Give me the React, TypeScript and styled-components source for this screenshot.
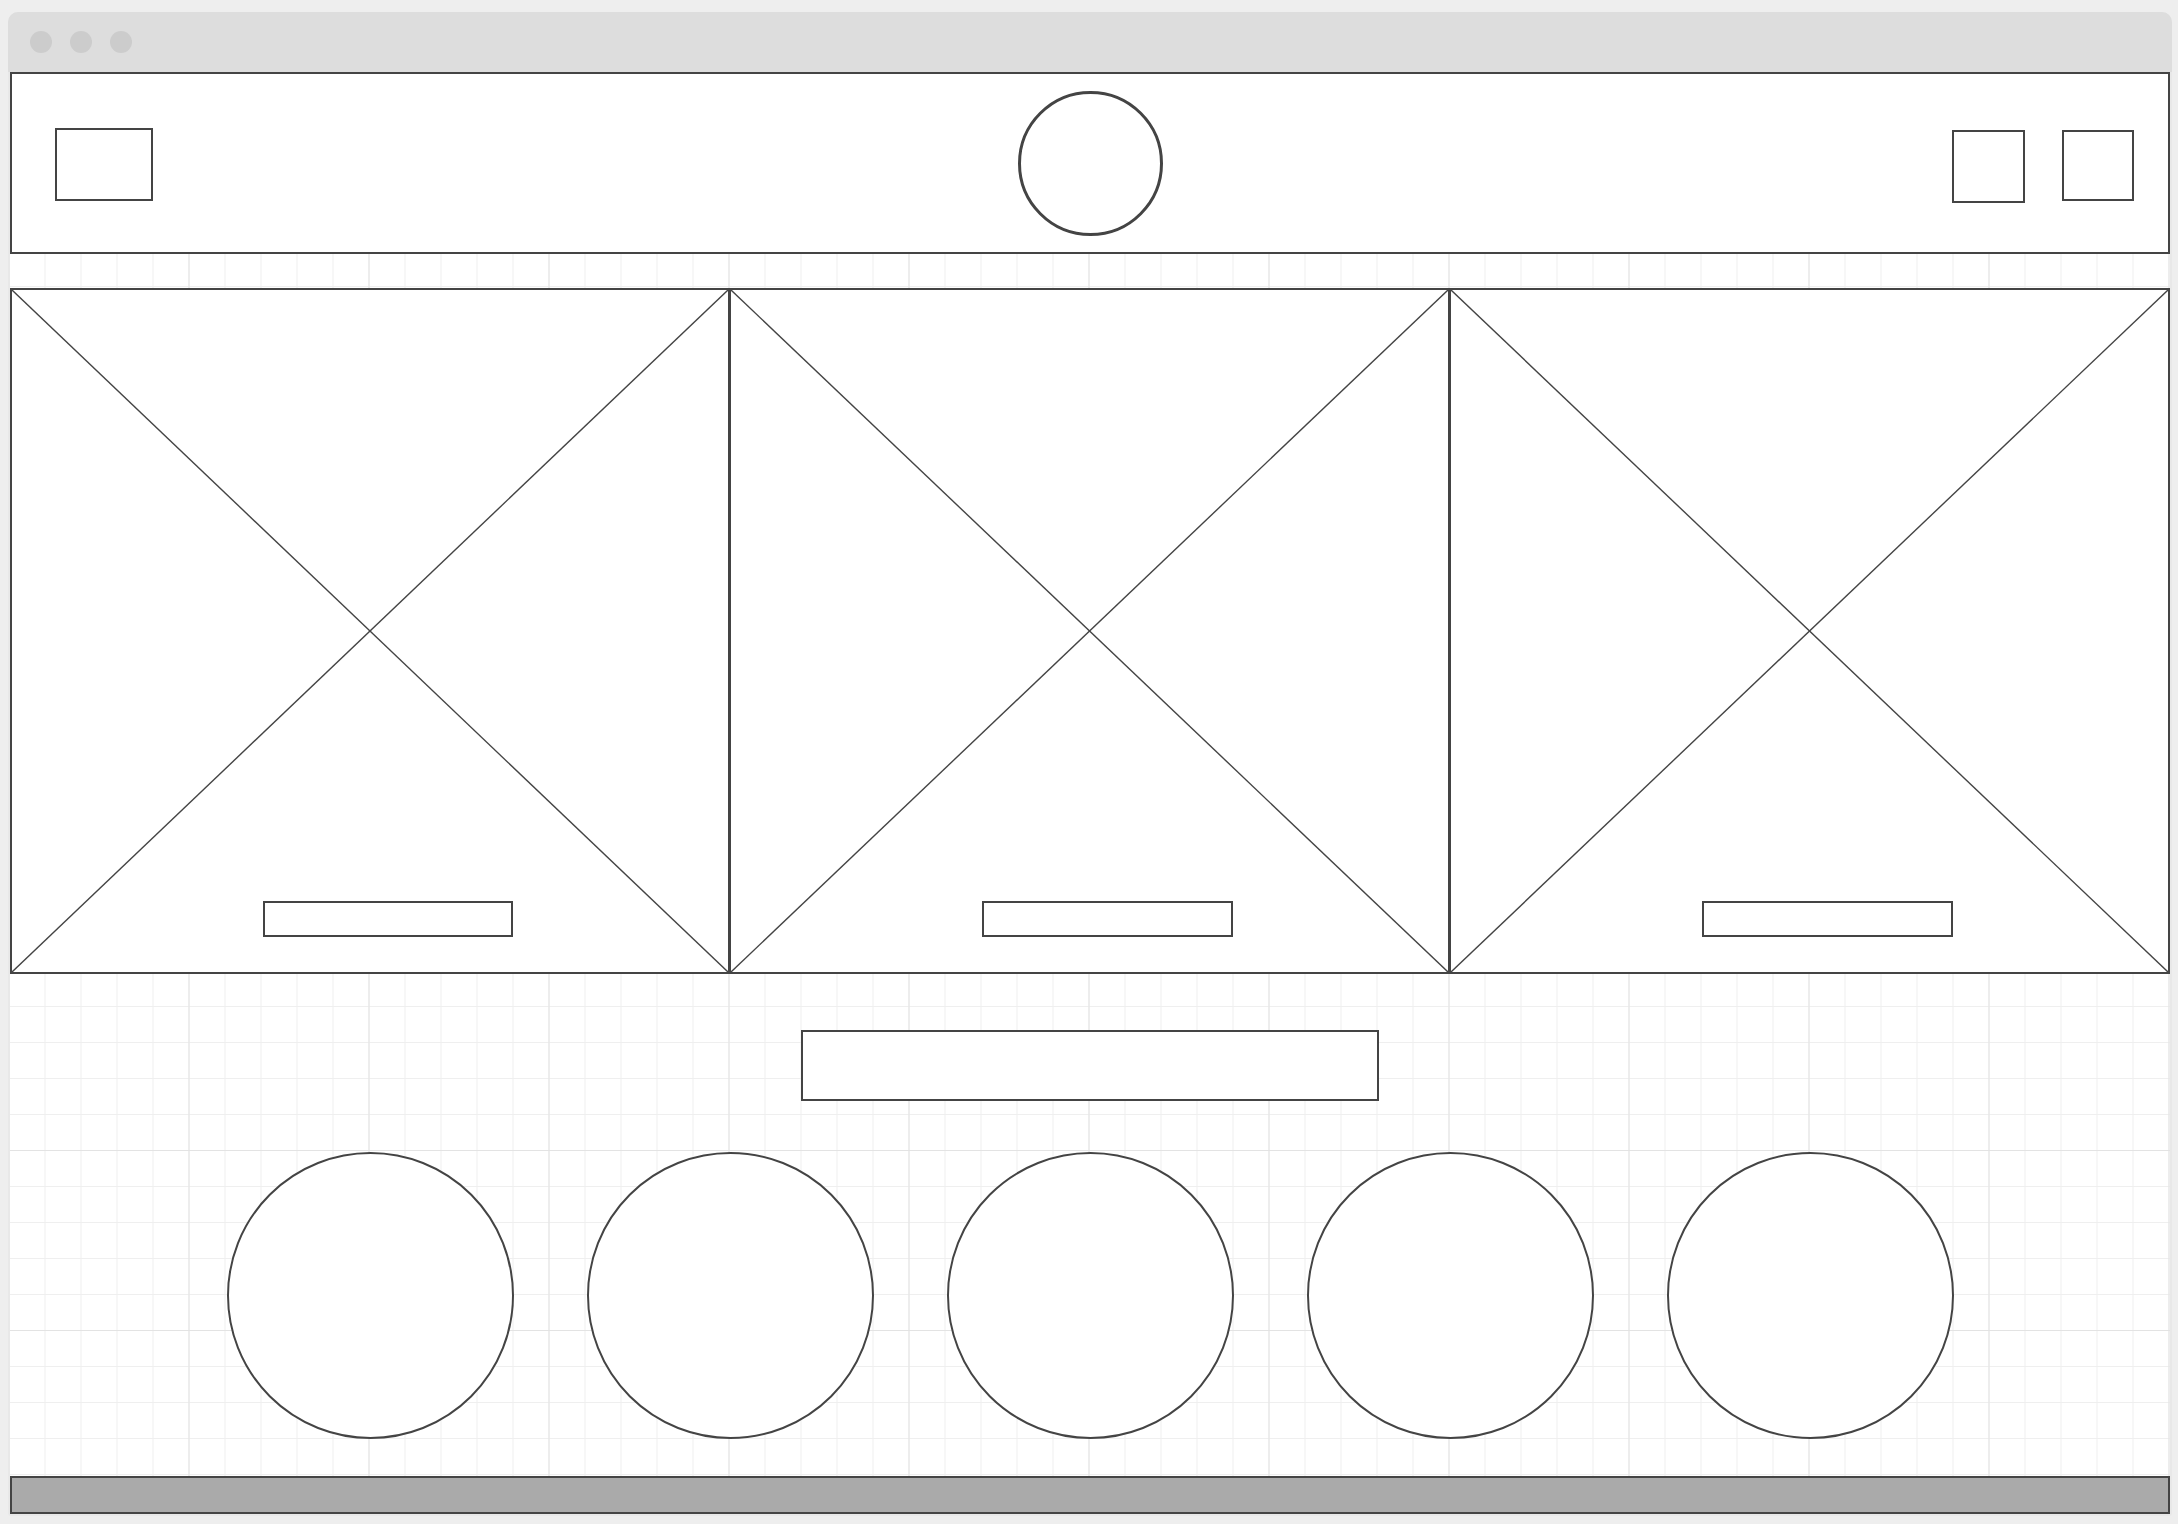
import React from "react";
import styled, { createGlobalStyle } from "styled-components";

const GlobalStyle = createGlobalStyle`
  html, body {
    margin: 0;
    padding: 0;
    background: #eeeeee;
  }
  body {
    font-family: "Liberation Sans", Arial, sans-serif;
  }
  * { box-sizing: border-box; }
`;

const INK = "#444444";

const Page = styled.div`
  min-height: 1524px;
  padding: 12px 6px 8px 8px;
`;

const Window = styled.div`
  width: 2164px;
  background: #e8e8e8;
  border-radius: 10px 10px 3px 3px;
  overflow: hidden;
`;

const TitleBar = styled.div`
  height: 60px;
  background: #dddddd;
  display: flex;
  align-items: center;
  gap: 18px;
  padding-left: 22px;
`;

const Dot = styled.span`
  width: 22px;
  height: 22px;
  border-radius: 50%;
  background: #cccccc;
`;

const Body = styled.div`
  margin: 0 2px 2px;
  display: flex;
  flex-direction: column;
  background-color: #ffffff;
  background-image:
    linear-gradient(to right, #e3e3e3 1.5px, transparent 1.5px),
    linear-gradient(to bottom, #e3e3e3 1.5px, transparent 1.5px),
    linear-gradient(to right, #efefef 1.5px, transparent 1.5px),
    linear-gradient(to bottom, #efefef 1.5px, transparent 1.5px);
  background-size: 180px 100%, 100% 180px, 36px 100%, 100% 36px;
  background-position: -1.5px 0, 0 -2px, -1.5px 0, 0 -2px;
`;

const Header = styled.header`
  height: 182px;
  border: 2px solid ${INK};
  background: #ffffff;
  display: grid;
  grid-template-columns: 1fr auto 1fr;
  align-items: start;
`;

const HeaderLeft = styled.div`
  justify-self: start;
  padding: 54px 0 0 43px;
`;

const HeaderCenter = styled.div`
  padding-top: 17px;
`;

const HeaderRight = styled.div`
  justify-self: end;
  display: flex;
  align-items: flex-start;
  gap: 37px;
  padding: 56px 34px 0 0;
`;

const Box = styled.div<{ $w: number; $h: number }>`
  width: ${(p) => p.$w}px;
  height: ${(p) => p.$h}px;
  border: 2px solid ${INK};
  background: #ffffff;
`;

const LogoCircle = styled.div`
  width: 145px;
  height: 145px;
  border-radius: 50%;
  border: 3px solid ${INK};
  background: #ffffff;
`;

const Carousel = styled.section`
  margin-top: 34px;
  height: 686px;
  display: grid;
  grid-template-columns: repeat(3, minmax(0, 1fr));
  grid-template-rows: minmax(0, 1fr);
`;

const Card = styled.div<{ $joined?: boolean }>`
  position: relative;
  min-height: 0;
  overflow: hidden;
  border: 2px solid ${INK};
  border-left-width: ${(p) => (p.$joined ? 1 : 2)}px;
  background: #ffffff;
`;

const Placeholder = styled.svg`
  display: block;
  width: 100%;
  height: 100%;
`;

const Caption = styled.div`
  position: absolute;
  left: 35%;
  width: 35%;
  bottom: 35px;
  height: 36px;
  border: 2px solid ${INK};
  background: #ffffff;
`;

const SearchBox = styled.div`
  align-self: center;
  margin-top: 56px;
  width: 578px;
  height: 71px;
  border: 2px solid ${INK};
  background: #ffffff;
`;

const CircleRow = styled.section`
  margin-top: 51px;
  display: flex;
  justify-content: center;
  gap: 73px;
`;

const Bubble = styled.div`
  width: 287px;
  height: 287px;
  border-radius: 50%;
  border: 2px solid ${INK};
  background: #ffffff;
`;

const Footer = styled.footer`
  margin-top: 37px;
  height: 38px;
  border: 2px solid ${INK};
  background: #aaaaaa;
`;

const ImagePlaceholder: React.FC = () => (
  <Placeholder viewBox="0 0 100 100" preserveAspectRatio="none">
    <line x1="0" y1="0" x2="100" y2="100" stroke={INK} strokeWidth="1.4" vectorEffect="non-scaling-stroke" />
    <line x1="100" y1="0" x2="0" y2="100" stroke={INK} strokeWidth="1.4" vectorEffect="non-scaling-stroke" />
  </Placeholder>
);

export default function App() {
  const slides = [0, 1, 2];
  const bubbles = [0, 1, 2, 3, 4];
  return (
    <>
      <GlobalStyle />
      <Page>
        <Window>
          <TitleBar>
            <Dot />
            <Dot />
            <Dot />
          </TitleBar>
          <Body>
            <Header>
              <HeaderLeft>
                <Box $w={98} $h={73} />
              </HeaderLeft>
              <HeaderCenter>
                <LogoCircle />
              </HeaderCenter>
              <HeaderRight>
                <Box $w={73} $h={73} />
                <Box $w={72} $h={71} />
              </HeaderRight>
            </Header>
            <Carousel>
              {slides.map((i) => (
                <Card key={i} $joined={i > 0}>
                  <ImagePlaceholder />
                  <Caption />
                </Card>
              ))}
            </Carousel>
            <SearchBox />
            <CircleRow>
              {bubbles.map((i) => (
                <Bubble key={i} />
              ))}
            </CircleRow>
            <Footer />
          </Body>
        </Window>
      </Page>
    </>
  );
}
